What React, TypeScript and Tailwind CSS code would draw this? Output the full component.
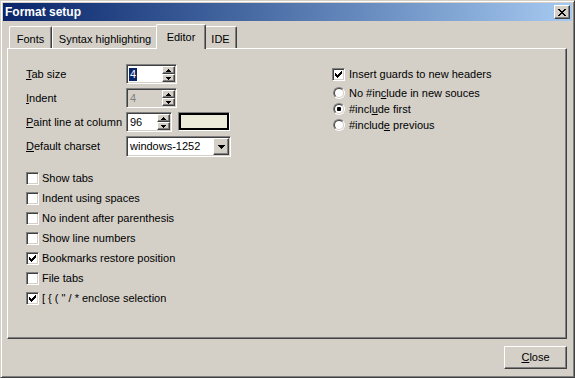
import type { ReactNode } from 'react'

// classic 3D edges
const raised = 'border border-t-white border-l-white border-r-[#404040] border-b-[#404040] shadow-[inset_-1px_-1px_0_#808080]'
const sunken = 'border border-t-[#808080] border-l-[#808080] border-r-white border-b-white shadow-[inset_1px_1px_0_#404040,inset_-1px_-1px_0_#d4d0c8] p-px'

function Px({ w, h, d }: { w: number; h: number; d: string }) {
  return (
    <svg width={w} height={h} viewBox={`0 0 ${w} ${h}`} shapeRendering="crispEdges">
      <path d={d} fill="#000" />
    </svg>
  )
}

const ARROW_UP = 'M2 0h1v1H2zM1 1h3v1H1zM0 2h5v1H0z'
const ARROW_DOWN = 'M0 0h5v1H0zM1 1h3v1H1zM2 2h1v1H2z'
const ARROW_COMBO = 'M0 0h7v1H0zM1 1h5v1H1zM2 2h3v1H2zM3 3h1v1H3z'
const CHECK = 'M0 2h1v3H0zM1 3h1v3H1zM2 4h1v3H2zM3 3h1v3H3zM4 2h1v3H4zM5 1h1v3H5zM6 0h1v3H6z'
const CROSS = 'M0 0h2v1H0zM6 0h2v1H6zM1 1h2v1H1zM5 1h2v1H5zM2 2h4v1H2zM3 3h2v1H3zM2 4h4v1H2zM1 5h2v1H1zM5 5h2v1H5zM0 6h2v1H0zM6 6h2v1H6z'

function Checkbox({ checked }: { checked?: boolean }) {
  return (
    <div className={`w-[13px] h-[13px] shrink-0 bg-white flex items-center justify-center ${sunken}`}>
      {checked && <Px w={7} h={7} d={CHECK} />}
    </div>
  )
}

function Radio({ checked }: { checked?: boolean }) {
  return (
    <div className="w-[12px] h-[12px] shrink-0 rounded-full border border-t-[#808080] border-l-[#808080] border-r-white border-b-white">
      <div className="w-full h-full rounded-full bg-white border border-t-[#404040] border-l-[#404040] border-r-[#d4d0c8] border-b-[#d4d0c8] flex items-center justify-center">
        {checked && <div className="w-[4px] h-[4px] bg-black rounded-[1px]" />}
      </div>
    </div>
  )
}

function CheckRow({ label, checked }: { label: ReactNode; checked?: boolean }) {
  return (
    <div className="h-[20px] flex items-center gap-[3px]">
      <Checkbox checked={checked} />
      <span>{label}</span>
    </div>
  )
}

function RadioRow({ label, checked }: { label: ReactNode; checked?: boolean }) {
  return (
    <div className="h-[16px] flex items-center gap-[4px] pl-px">
      <Radio checked={checked} />
      <span>{label}</span>
    </div>
  )
}

function SpinEdit({ width, children, disabled }: { width: string; children: ReactNode; disabled?: boolean }) {
  return (
    <div className={`${width} h-[20px] flex ${sunken} ${disabled ? 'bg-[#d4d0c8] text-[#808080]' : 'bg-white'}`}>
      <div className="flex-1 flex items-center pl-px">{children}</div>
      <div className="w-[13px] flex flex-col">
        <div className={`h-[8px] bg-[#d4d0c8] flex items-center justify-center ${raised}`}>
          <Px w={5} h={3} d={ARROW_UP} />
        </div>
        <div className={`h-[8px] bg-[#d4d0c8] flex items-center justify-center ${raised}`}>
          <Px w={5} h={3} d={ARROW_DOWN} />
        </div>
      </div>
    </div>
  )
}

function Label({ children }: { children: ReactNode }) {
  return <span className="w-[100px] shrink-0">{children}</span>
}

const tabs = [
  { name: 'Fonts', width: 'w-[43px]' },
  { name: 'Syntax highlighting', width: 'w-[106px]' },
  { name: 'Editor', width: 'w-[50px]', active: true },
  { name: 'IDE', width: 'w-[33px]' },
]

export default function App() {
  return (
    <div className="w-[575px] h-[378px] bg-[#d4d0c8] border border-t-[#d4d0c8] border-l-[#d4d0c8] border-r-[#404040] border-b-[#404040] shadow-[inset_1px_1px_0_#fff,inset_-1px_-1px_0_#808080] p-[2px] flex flex-col text-[11px] leading-[13px] text-black font-['Liberation_Sans',Arial,sans-serif]">
      {/* Title bar */}
      <div className="h-[18px] shrink-0 flex items-center bg-linear-to-r from-[#0a246a] to-[#a6caf0] pl-[2px] pr-[2px]">
        <span className="flex-1 text-white font-bold text-[12px]">Format setup</span>
        <div className={`w-[16px] h-[14px] bg-[#d4d0c8] flex items-center justify-center ${raised}`}>
          <Px w={8} h={7} d={CROSS} />
        </div>
      </div>

      <div className="flex-1 flex flex-col pl-[4px] pr-[5px] pt-[3px]">
        {/* Tabs */}
        <div className="h-[24px] shrink-0 flex items-end pl-[2px]">
          {tabs.map(t =>
            t.active ? (
              <div
                key={t.name}
                className={`${t.width} relative z-10 h-[25px] -mb-px -mx-[2px] bg-[#d4d0c8] border-l border-t border-r border-l-white border-t-white border-r-[#404040] shadow-[inset_-1px_0_0_#808080] rounded-t-[2px] text-center pt-[6px]`}
              >
                {t.name}
              </div>
            ) : (
              <div
                key={t.name}
                className={`${t.width} h-[22px] border-l border-t border-r border-l-white border-t-white border-r-[#404040] shadow-[inset_-1px_0_0_#808080] rounded-t-[2px] text-center pt-[6px]`}
              >
                {t.name}
              </div>
            )
          )}
        </div>

        {/* Editor page */}
        <div className="h-[291px] shrink-0 flex pl-[18px] pt-[15px] border border-t-white border-l-white border-r-[#404040] border-b-[#404040] shadow-[inset_-1px_-1px_0_#808080]">
          <div className="w-[306px] shrink-0 flex flex-col">
            <div className="flex flex-col gap-[4px]">
              <div className="h-[20px] flex items-center">
                <Label><u>T</u>ab size</Label>
                <SpinEdit width="w-[51px]">
                  <span className="bg-[#0a246a] text-white px-px">4</span>
                </SpinEdit>
              </div>
              <div className="h-[20px] flex items-center">
                <Label><u>I</u>ndent</Label>
                <SpinEdit width="w-[51px]" disabled>
                  <span className="px-px">4</span>
                </SpinEdit>
              </div>
              <div className="h-[20px] flex items-start">
                <span className="w-[100px] shrink-0 self-center"><u>P</u>aint line at column</span>
                <SpinEdit width="w-[46px]">
                  <span className="px-px">96</span>
                </SpinEdit>
                <div className="ml-[6px] w-[52px] h-[19px] border border-t-[#808080] border-l-[#808080] border-r-white border-b-white">
                  <div className="w-full h-full border-2 border-black bg-[#ecead9]" />
                </div>
              </div>
              <div className="h-[21px] flex items-center">
                <Label><u>D</u>efault charset</Label>
                <div className={`w-[105px] h-[21px] bg-white flex ${sunken}`}>
                  <span className="flex-1 self-center pl-[2px]">windows-1252</span>
                  <div className={`w-[16px] bg-[#d4d0c8] flex items-center justify-center ${raised}`}>
                    <Px w={7} h={4} d={ARROW_COMBO} />
                  </div>
                </div>
              </div>
            </div>

            <div className="mt-[11px] flex flex-col">
              <CheckRow label="Show tabs" />
              <CheckRow label="Indent using spaces" />
              <CheckRow label="No indent after parenthesis" />
              <CheckRow label="Show line numbers" />
              <CheckRow label="Bookmarks restore position" checked />
              <CheckRow label="File tabs" />
              <CheckRow label={'[ { ( " / * enclose selection'} checked />
            </div>
          </div>

          <div className="flex flex-col">
            <div className="h-[20px] flex items-center gap-[4px]">
              <Checkbox checked />
              <span>Insert guards to new headers</span>
            </div>
            <div className="mt-px flex flex-col">
              <RadioRow label={<>No #in<u>c</u>lude in new souces</>} />
              <RadioRow label={<>#incl<u>u</u>de first</>} checked />
              <RadioRow label={<>#includ<u>e</u> previous</>} />
            </div>
          </div>
        </div>

        {/* Footer */}
        <div className="flex justify-end pt-[7px]">
          <div className={`w-[63px] h-[23px] bg-[#d4d0c8] flex items-center justify-center ${raised}`}>
            <span><u>C</u>lose</span>
          </div>
        </div>
      </div>
    </div>
  )
}
